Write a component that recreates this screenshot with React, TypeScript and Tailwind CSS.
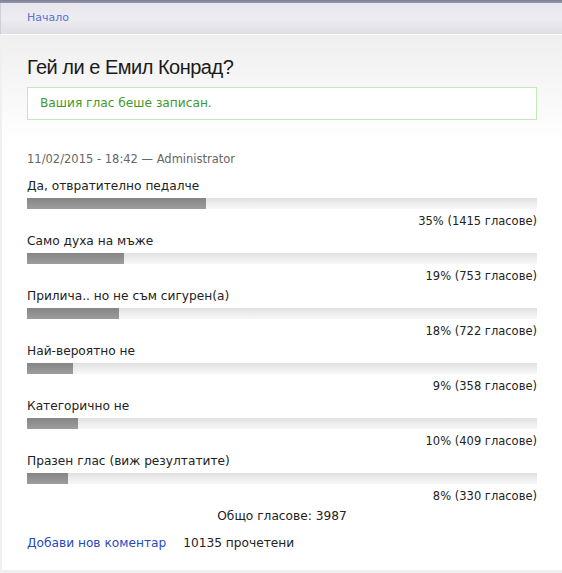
import React from "react";

const items = [
  { label: "Да, отвратително педалче", pct: 35, votes: 1415 },
  { label: "Само духа на мъже", pct: 19, votes: 753 },
  { label: "Прилича.. но не съм сигурен(а)", pct: 18, votes: 722 },
  { label: "Най-вероятно не", pct: 9, votes: 358 },
  { label: "Категорично не", pct: 10, votes: 409 },
  { label: "Празен глас (виж резултатите)", pct: 8, votes: 330 },
];

export default function App() {
  return (
    <div
      className="w-[562px] h-[573px] overflow-hidden bg-[#f0f0f0] text-[11.5px] text-[#222]"
      style={{ fontFamily: '"DejaVu Sans", Verdana, sans-serif' }}
    >
      <div className="h-[3px] bg-gradient-to-b from-[#7c7e93] to-[#9899ab]" />
      <div className="h-[32px] flex items-center pl-[26px] border-l border-[#cfcfd6] bg-gradient-to-b from-[#e6e6ec] via-[#ececf1] to-[#dedee4] border-b border-b-white">
        <a className="text-[11px] text-[#5b6fd6]">Начало</a>
      </div>
      <div className="ml-[2px] h-[535px] bg-gradient-to-b from-[#efefef] via-white via-[20%] to-white pl-[25px] pr-[25px] pt-[20px]">
        <h1
          className="text-[20px] leading-[24px] tracking-[-0.5px] text-[#1a1a1a]"
          style={{ fontFamily: '"Liberation Sans", Arial, sans-serif' }}
        >
          Гей ли е Емил Конрад?
        </h1>
        <div className="mt-[8px] h-[33px] border border-[#c2eab8] bg-white flex items-center pl-[12px] text-[12.2px] text-[#3d9a2e]">
          Вашия глас беше записан.
        </div>
        <div className="mt-[31px] h-[16px] leading-[16px] text-[#666]">
          11/02/2015 - 18:42 — Administrator
        </div>
        <div className="mt-[11px]">
          {items.map((it) => (
            <div key={it.label} className="mb-[4px]">
              <div className="h-[16px] leading-[16px] text-[12.2px] text-[#222]">{it.label}</div>
              <div className="mt-[4px] h-[12px] bg-gradient-to-b from-[#e0e0e0] via-[#ededed] to-[#f7f7f7] border-b border-white">
                <div
                  className="h-[11px] bg-gradient-to-b from-[#858585] to-[#9d9d9d]"
                  style={{ width: `${it.pct}%` }}
                />
              </div>
              <div className="mt-[3px] h-[16px] leading-[16px] text-right text-[#222]">
                {it.pct}% ({it.votes} гласове)
              </div>
            </div>
          ))}
        </div>
        <div className="h-[16px] leading-[16px] text-center text-[12.2px] text-[#222]">
          Общо гласове: 3987
        </div>
        <div className="mt-[11px] h-[16px] leading-[16px] flex gap-[17px] text-[12.2px]">
          <a className="text-[#2848c0]">Добави нов коментар</a>
          <span className="text-[#222]">10135 прочетени</span>
        </div>
      </div>
    </div>
  );
}
